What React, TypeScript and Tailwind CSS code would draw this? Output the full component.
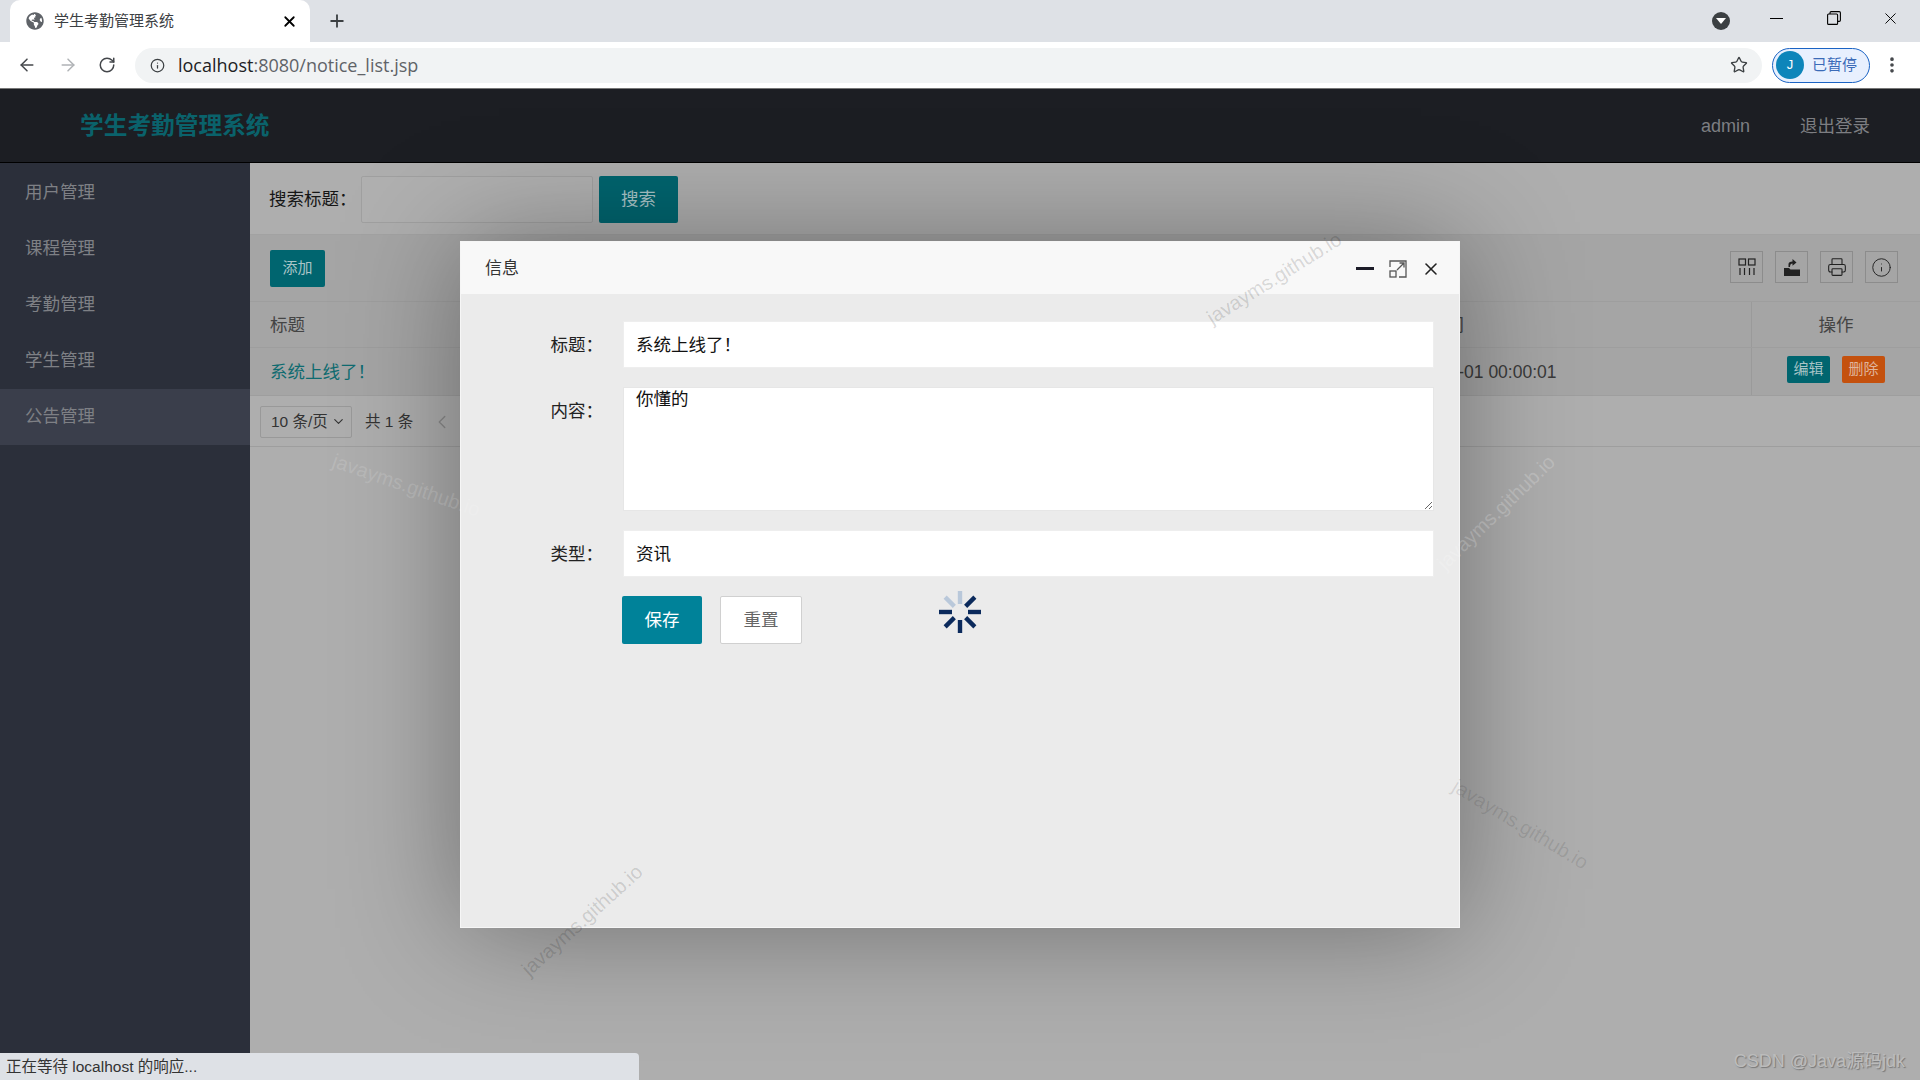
import React from "react";
import { ArrowLeft, ArrowRight, ChevronDown, ChevronLeft, Info, MoreVertical, Plus, Printer, RotateCw, Star, X } from "lucide-react";
import { FaGlobeAmericas } from "react-icons/fa";

const cjk = "font-['Liberation_Sans','Noto_Sans_CJK_SC',sans-serif]";

const menus = ["用户管理", "课程管理", "考勤管理", "学生管理", "公告管理"];

const Watermark = ({ className }: { className: string }) => (
  <span className={`absolute text-[20px] leading-[23px] font-['Liberation_Sans',sans-serif] whitespace-nowrap pointer-events-none ${className}`}>
    javayms.github.io
  </span>
);

const Browser = () => (
  <>
    <div className="h-[42px] bg-[#dee1e6] flex items-end pl-[10px] shrink-0">
      <div className="w-[300px] h-[42px] bg-white rounded-t-[10px] flex items-center pl-[16px] pr-[12px] gap-[10px]">
        <FaGlobeAmericas className="text-[#5f6368] w-[18px] h-[18px]" />
        <span className="text-[15px] text-[#3c4043] flex-1">学生考勤管理系统</span>
        <X className="w-[17px] h-[17px] text-black" strokeWidth={2.5} />
      </div>
      <div className="h-[42px] flex items-center ml-[17px] flex-1 pr-[20px]">
        <Plus className="w-[20px] h-[20px] text-[#3c4043]" strokeWidth={2.2} />
        <div className="ml-auto flex items-center">
          <div className="w-[18px] h-[18px] rounded-full bg-[#3c4043] flex items-center justify-center mr-[40px]">
            <div className="w-0 h-0 border-x-[5px] border-x-transparent border-t-[6px] border-t-white" />
          </div>
          <div className="w-[13px] h-px bg-black mr-[44px] -mt-[6px]" />
          <svg viewBox="0 0 14 14" className="w-[14px] h-[14px] mr-[40px] -mt-[6px]" fill="none" stroke="#000" strokeWidth="1.1">
            <rect x="0.6" y="3" width="10" height="10.4" rx="1" />
            <path d="M3 3V1.8A1.2 1.2 0 0 1 4.2.6h8A1.2 1.2 0 0 1 13.4 1.8v7.4A1.2 1.2 0 0 1 12.2 10.4H10.6" />
          </svg>
          <X className="w-[19px] h-[19px] text-black -mt-[6px]" strokeWidth={1.2} />
        </div>
      </div>
    </div>
    <div className="h-[47px] bg-white flex items-center shrink-0 border-b border-[#777]">
      <ArrowLeft className="w-[20px] h-[20px] ml-[17px] text-[#44474b]" strokeWidth={1.8} />
      <ArrowRight className="w-[20px] h-[20px] ml-[21px] text-[#b0b3b6]" strokeWidth={1.8} />
      <RotateCw className="w-[18px] h-[18px] ml-[20px] text-[#44474b]" strokeWidth={2} />
      <div className="ml-[19px] w-[1627px] h-[35px] rounded-full bg-[#f1f3f4] flex items-center pl-[15px] pr-[14px]">
        <Info className="w-[15px] h-[15px] text-[#3c4043]" strokeWidth={2} />
        <span className="ml-[13px] text-[18px] text-[#5f6368] font-['Open_Sans',sans-serif]">
          <span className="text-[#202124]">localhost</span>:8080/notice_list.jsp
        </span>
        <Star className="w-[18px] h-[18px] ml-auto text-[#3c4043]" strokeWidth={1.8} />
      </div>
      <div className="ml-[10px] w-[98px] h-[35px] rounded-full border-[1.5px] border-[#1a63c4] bg-[#e8f0fe] flex items-center pl-[3px]">
        <div className="w-[28px] h-[28px] rounded-full bg-[#0d85ba] text-white text-[13px] flex items-center justify-center">J</div>
        <span className="ml-[8px] text-[15px] text-[#3b6bb8]">已暂停</span>
      </div>
      <MoreVertical className="w-[20px] h-[20px] ml-[12px] text-[#44474b]" strokeWidth={2.4} />
    </div>
  </>
);

const PageBehind = () => (
  <div className="flex-1 flex flex-col min-h-0">
    <header className="h-[74px] bg-[#1c1e23] flex items-center pl-[80px] pr-[50px] pt-[2px] border-b border-black shrink-0">
      <span className="text-[23.7px] font-bold text-[#0a626b]">学生考勤管理系统</span>
      <span className="ml-auto text-[18px] text-[#7d7e82]">admin</span>
      <span className="ml-[50px] text-[17.5px] text-[#7d7e82]">退出登录</span>
    </header>
    <div className="flex-1 flex min-h-0">
      <aside className="w-[250px] bg-[#2b2f3a] shrink-0 pt-[2px]">
        {menus.map((m) => (
          <div
            key={m}
            className={`h-[56px] flex items-center pl-[25px] pb-[1px] text-[17.5px] text-[#7e8085] ${m === "公告管理" ? "bg-[#3a3e4b]" : ""}`}
          >
            {m}
          </div>
        ))}
      </aside>
      <main className="flex-1 bg-[#aeaeae] flex flex-col">
        <div className="h-[72px] flex items-center pl-[19px] pt-[1px] border-b border-[#a2a2a2] bg-[#aeaeae]">
          <span className="w-[92px] text-[17.5px] text-[#161616] whitespace-nowrap">搜索标题：</span>
          <div className="w-[232px] h-[47px] border border-[#a0a0a0] rounded-[2px] bg-[#b0b0b0]" />
          <button className="ml-[6px] w-[79px] h-[47px] bg-[#00656f] text-[#a8c4c7] text-[17.5px] rounded-[2px]">搜索</button>
        </div>
        <div className="h-[67px] flex items-center pl-[20px] pr-[22px] bg-[#a5a5a5] border-b border-[#9e9e9e]">
          <button className="w-[55px] h-[37px] bg-[#00656f] text-[#a8c4c7] text-[15px] rounded-[2px]">添加</button>
          <div className="ml-auto flex gap-[12px] -mt-[2px]">
            <div className="w-[33px] h-[32px] border border-[#8c8c8c] flex items-center justify-center">
              <svg viewBox="0 0 18 18" className="w-[18px] h-[18px]" fill="none" stroke="#222" strokeWidth="1.2">
                <rect x="1" y="1" width="6.5" height="6" />
                <rect x="10.5" y="1" width="6.5" height="6" />
                <path d="M2 10v7M6.5 10v7M11.5 10v7M16 10v7" />
              </svg>
            </div>
            <div className="w-[33px] h-[32px] border border-[#8c8c8c] flex items-center justify-center">
              <svg viewBox="0 0 18 18" className="w-[18px] h-[18px]" fill="#222">
                <path d="M1 10h5l1.5 1.5H17V18H1z" />
                <path d="M5.5 9V6.2C5.5 4.6 7 3.6 9.5 3.6V1l4 3.4-4 3.4V5.4C8 5.4 7 6.4 7 9z" />
              </svg>
            </div>
            <div className="w-[33px] h-[32px] border border-[#8c8c8c] flex items-center justify-center">
              <Printer className="w-[20px] h-[20px] text-[#222]" strokeWidth={1.3} />
            </div>
            <div className="w-[33px] h-[32px] border border-[#8c8c8c] flex items-center justify-center">
              <Info className="w-[21px] h-[21px] text-[#222]" strokeWidth={1.1} />
            </div>
          </div>
        </div>
        <div className="h-[46px] flex items-center bg-[#a5a5a5] border-b border-[#9e9e9e] text-[17.5px] text-[#444]">
          <div className="w-[1124px] pl-[20px] pt-[2px]">标题</div>
          <div className="w-[377px] pl-[20px] pt-[2px]">发布时间</div>
          <div className="flex-1 h-full flex items-center justify-center border-l border-[#9a9a9a] pt-[2px]">操作</div>
        </div>
        <div className="h-[48px] flex items-center bg-[#a5a5a5] border-b border-[#9e9e9e] text-[17.5px] text-[#333]">
          <div className="w-[1124px] pl-[20px] pt-[2px] text-[#0e6b70]">系统上线了！</div>
          <div className="w-[377px] pl-[20px] pt-[2px] text-[#3a3a3a]">2020-01-01 00:00:01</div>
          <div className="flex-1 h-full flex items-center justify-center gap-[12px] border-l border-[#9a9a9a] pb-[4px]">
            <button className="w-[43px] h-[27px] bg-[#00656f] rounded-[2px] text-[#a8c4c7] text-[15px]">编辑</button>
            <button className="w-[43px] h-[27px] bg-[#c4510e] rounded-[2px] text-[#e0b59c] text-[15px]">删除</button>
          </div>
        </div>
        <div className="h-[51px] flex items-center pl-[10px] pt-[1px] bg-[#aeaeae] border-b border-[#9e9e9e] text-[15.5px] text-[#333]">
          <div className="w-[92px] h-[32px] border border-[#999] rounded-[2px] flex items-center pl-[10px] pr-[5px] justify-between">
            <span>10 条/页</span>
            <ChevronDown className="w-[15px] h-[15px]" strokeWidth={1.8} />
          </div>
          <span className="ml-[13px]">共 1 条</span>
          <ChevronLeft className="ml-[18px] w-[22px] h-[22px] text-[#8a8a8a]" strokeWidth={1.5} />
        </div>
      </main>
    </div>
  </div>
);

const Spinner = () => {
  const bars = [
    { a: 0, c: "#b9c8da" },
    { a: 45, c: "#0b2a5c" },
    { a: 90, c: "#0b2a5c" },
    { a: 135, c: "#0b2a5c" },
    { a: 180, c: "#0b2a5c" },
    { a: 225, c: "#0b2a5c" },
    { a: 270, c: "#0b2a5c" },
    { a: 315, c: "#b9c8da" },
  ];
  return (
    <svg viewBox="-22 -22 44 44" className="absolute left-[477px] top-[296px] w-[44px] h-[44px]">
      {bars.map((b) => (
        <line key={b.a} x1="0" y1="-8" x2="0" y2="-21" stroke={b.c} strokeWidth="4.4" transform={`rotate(${b.a})`} />
      ))}
    </svg>
  );
};

const Field = ({ label, value }: { label: string; value: string }) => (
  <div className="flex items-center">
    <label className="w-[142px] text-right text-[17.5px] text-[#222] pt-[2px]">{label}：</label>
    <div className="ml-[20px] w-[811px] h-[47px] bg-white border border-[#eee] flex items-center pl-[12px] pt-[2px] text-[17.5px] text-[#111]">
      {value}
    </div>
  </div>
);

const Modal = () => (
  <div className="absolute left-[460px] top-[152px] w-[1000px] h-[687px] bg-[#ebebeb] border border-[#f6f6f6] shadow-[0_0_110px_rgba(0,0,0,0.36)] flex flex-col">
    <div className="h-[52px] bg-[#f8f8f8] flex items-center pl-[24px] pr-[18px] pt-[1px] text-[17px] text-[#333] shrink-0">
      信息
      <div className="ml-auto flex items-center">
        <div className="w-[18px] h-[3px] bg-[#1c1c28]" />
        <svg viewBox="0 0 18 18" className="ml-[15px] w-[18px] h-[18px]" fill="none" stroke="#555" strokeWidth="1.3">
          <path d="M1 7V1h16v16h-7" />
          <rect x="1" y="11" width="6" height="6" />
          <path d="M8 10 15 3M10.5 3H15v4.5" />
        </svg>
        <X className="ml-[14px] w-[20px] h-[20px] text-[#222]" strokeWidth={1.9} />
      </div>
    </div>
    <div className="relative flex-1 pt-[27px]">
      <Field label="标题" value="系统上线了！" />
      <div className="flex mt-[19px]">
        <label className="w-[142px] text-right text-[17.5px] text-[#222] pt-[11px]">内容：</label>
        <textarea
          readOnly
          defaultValue="你懂的"
          className="ml-[20px] w-[811px] h-[124px] bg-white border border-[#e6e6e6] pl-[12px] pt-[2px] text-[17.5px] text-[#111] leading-[18px] outline-none"
        />
      </div>
      <div className="mt-[19px]">
        <Field label="类型" value="资讯" />
      </div>
      <div className="flex mt-[19px] ml-[161px] gap-[18px]">
        <button className="w-[80px] h-[48px] bg-[#008299] text-white text-[17.5px] rounded-[2px]">保存</button>
        <button className="w-[82px] h-[48px] bg-white border border-[#d0d0d0] text-[#666] text-[17.5px] rounded-[2px]">重置</button>
      </div>
      <Spinner />
    </div>
  </div>
);

export default function App() {
  return (
    <div className={`w-[1920px] h-[1080px] overflow-hidden flex flex-col ${cjk}`}>
      <Browser />
      <div className="relative flex-1 flex flex-col min-h-0 overflow-hidden">
        <PageBehind />
        <Modal />
        <Watermark className="left-[329px] top-[385px] rotate-[19deg] text-white/15" />
        <Watermark className="left-[1419px] top-[412px] -rotate-[44deg] text-white/20" />
        <Watermark className="left-[1443px] top-[724px] rotate-[31deg] text-black/10" />
        <Watermark className="left-[505px] top-[820px] -rotate-[42deg] text-black/15" />
        <Watermark className="left-[1197px] top-[178px] -rotate-[32deg] text-black/15" />
        <div className="absolute left-0 bottom-0 w-[639px] h-[27px] bg-[#dee1e6] rounded-tr-[4px] pl-[6px] flex items-center text-[15.5px] text-[#333]">
          正在等待 localhost 的响应...
        </div>
        <div className="absolute right-[15px] bottom-[5px] text-[18px] text-[#bcbcbc] [text-shadow:1px_1px_1px_#777]">
          CSDN @Java源码jdk
        </div>
      </div>
    </div>
  );
}
